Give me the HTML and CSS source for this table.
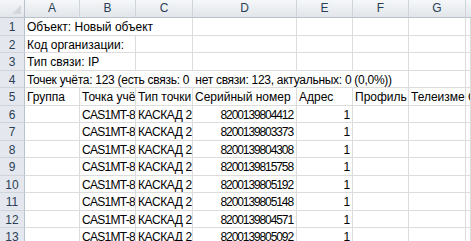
FILE: index.html
```html
<!DOCTYPE html>
<html lang="ru">
<head>
<meta charset="utf-8">
<title>Лист</title>
<link rel="stylesheet" href="styles.css">
</head>
<body>
<div class="sheet">
  <div class="corner"><span class="tri"></span></div>
  <div class="ch">A</div><div class="ch">B</div><div class="ch">C</div><div class="ch">D</div><div class="ch">E</div><div class="ch">F</div><div class="ch">G</div><div class="ch last"></div>

  <div class="rh">1</div>
  <div class="c span3">Объект: Новый объект</div><div class="c"></div><div class="c"></div><div class="c"></div><div class="c"></div><div class="c"></div>

  <div class="rh">2</div>
  <div class="c span2">Код организации:</div><div class="c"></div><div class="c"></div><div class="c"></div><div class="c"></div><div class="c"></div><div class="c"></div>

  <div class="rh">3</div>
  <div class="c span2">Тип связи: IP</div><div class="c"></div><div class="c"></div><div class="c"></div><div class="c"></div><div class="c"></div><div class="c"></div>

  <div class="rh">4</div>
  <div class="c span6 tight">Точек учёта: 123 (есть связь: 0&nbsp; нет связи: 123, актуальных: 0 (0,0%))</div><div class="c"></div><div class="c"></div>

  <div class="rh">5</div>
  <div class="c">Группа</div><div class="c">Точка учёта</div><div class="c">Тип точки</div><div class="c">Серийный номер</div><div class="c">Адрес</div><div class="c">Профиль учёта</div><div class="c">Телеизмерения</div><div class="c">Статус</div>

  <div class="rh">6</div>
  <div class="c"></div><div class="c code">CAS1MT-8</div><div class="c kind">КАСКАД 2</div><div class="c num">8200139804412</div><div class="c num">1</div><div class="c"></div><div class="c"></div><div class="c"></div>

  <div class="rh">7</div>
  <div class="c"></div><div class="c code">CAS1MT-8</div><div class="c kind">КАСКАД 2</div><div class="c num">8200139803373</div><div class="c num">1</div><div class="c"></div><div class="c"></div><div class="c"></div>

  <div class="rh">8</div>
  <div class="c"></div><div class="c code">CAS1MT-8</div><div class="c kind">КАСКАД 2</div><div class="c num">8200139804308</div><div class="c num">1</div><div class="c"></div><div class="c"></div><div class="c"></div>

  <div class="rh">9</div>
  <div class="c"></div><div class="c code">CAS1MT-8</div><div class="c kind">КАСКАД 2</div><div class="c num">8200139815758</div><div class="c num">1</div><div class="c"></div><div class="c"></div><div class="c"></div>

  <div class="rh">10</div>
  <div class="c"></div><div class="c code">CAS1MT-8</div><div class="c kind">КАСКАД 2</div><div class="c num">8200139805192</div><div class="c num">1</div><div class="c"></div><div class="c"></div><div class="c"></div>

  <div class="rh">11</div>
  <div class="c"></div><div class="c code">CAS1MT-8</div><div class="c kind">КАСКАД 2</div><div class="c num">8200139805148</div><div class="c num">1</div><div class="c"></div><div class="c"></div><div class="c"></div>

  <div class="rh">12</div>
  <div class="c"></div><div class="c code">CAS1MT-8</div><div class="c kind">КАСКАД 2</div><div class="c num">8200139804571</div><div class="c num">1</div><div class="c"></div><div class="c"></div><div class="c"></div>

  <div class="rh">13</div>
  <div class="c"></div><div class="c code">CAS1MT-8</div><div class="c kind">КАСКАД 2</div><div class="c num">8200139805092</div><div class="c num">1</div><div class="c"></div><div class="c"></div><div class="c"></div>
</div>
</body>
</html>
```

FILE: styles.css
```css
html, body {
  margin: 0;
  padding: 0;
  background: #ffffff;
  overflow: hidden;
}

.sheet {
  display: grid;
  grid-template-columns: 25px 55px 56px 57px 104px 56px 56px 57px 1fr;
  grid-template-rows: 18px repeat(13, 17.5px);
  width: 471px;
  font-family: "Liberation Sans", Arial, sans-serif;
  font-size: 12px;
  color: #000000;
}

.corner {
  position: relative;
  background: linear-gradient(#f4f6f8, #e3e7eb);
  border-right: 1px solid #b9c1cb;
  border-bottom: 1px solid #b9c1cb;
}

.tri {
  position: absolute;
  right: 3px;
  bottom: 3px;
  width: 0;
  height: 0;
  border-left: 9px solid transparent;
  border-bottom: 9px solid #d4d8dd;
}

.ch {
  background: linear-gradient(#f5f7f9, #e2e6ea);
  border-right: 1px solid #cfd4da;
  border-bottom: 1px solid #b9c1cb;
  color: #2b3f56;
  text-align: center;
  line-height: 17px;
}

.ch.last {
  border-right: none;
}

.rh {
  background: #e4e8ee;
  border-right: 1px solid #b9c1cb;
  border-bottom: 1px solid #cfd4da;
  color: #2b3f56;
  text-align: center;
  padding-top: 1px;
  line-height: 16px;
}

.c {
  border-right: 1px solid #dcdcdc;
  border-bottom: 1px solid #dcdcdc;
  white-space: nowrap;
  overflow: hidden;
  padding: 1px 2px 0;
  line-height: 16px;
  min-width: 0;
}

.num {
  text-align: right;
  letter-spacing: -1.1px;
  padding-right: 3px;
}

.code {
  letter-spacing: -0.7px;
}

.kind {
  letter-spacing: -0.4px;
}

.tight {
  letter-spacing: -0.28px;
}

.span2 { grid-column: span 2; }
.span3 { grid-column: span 3; }
.span6 { grid-column: span 6; }
```
